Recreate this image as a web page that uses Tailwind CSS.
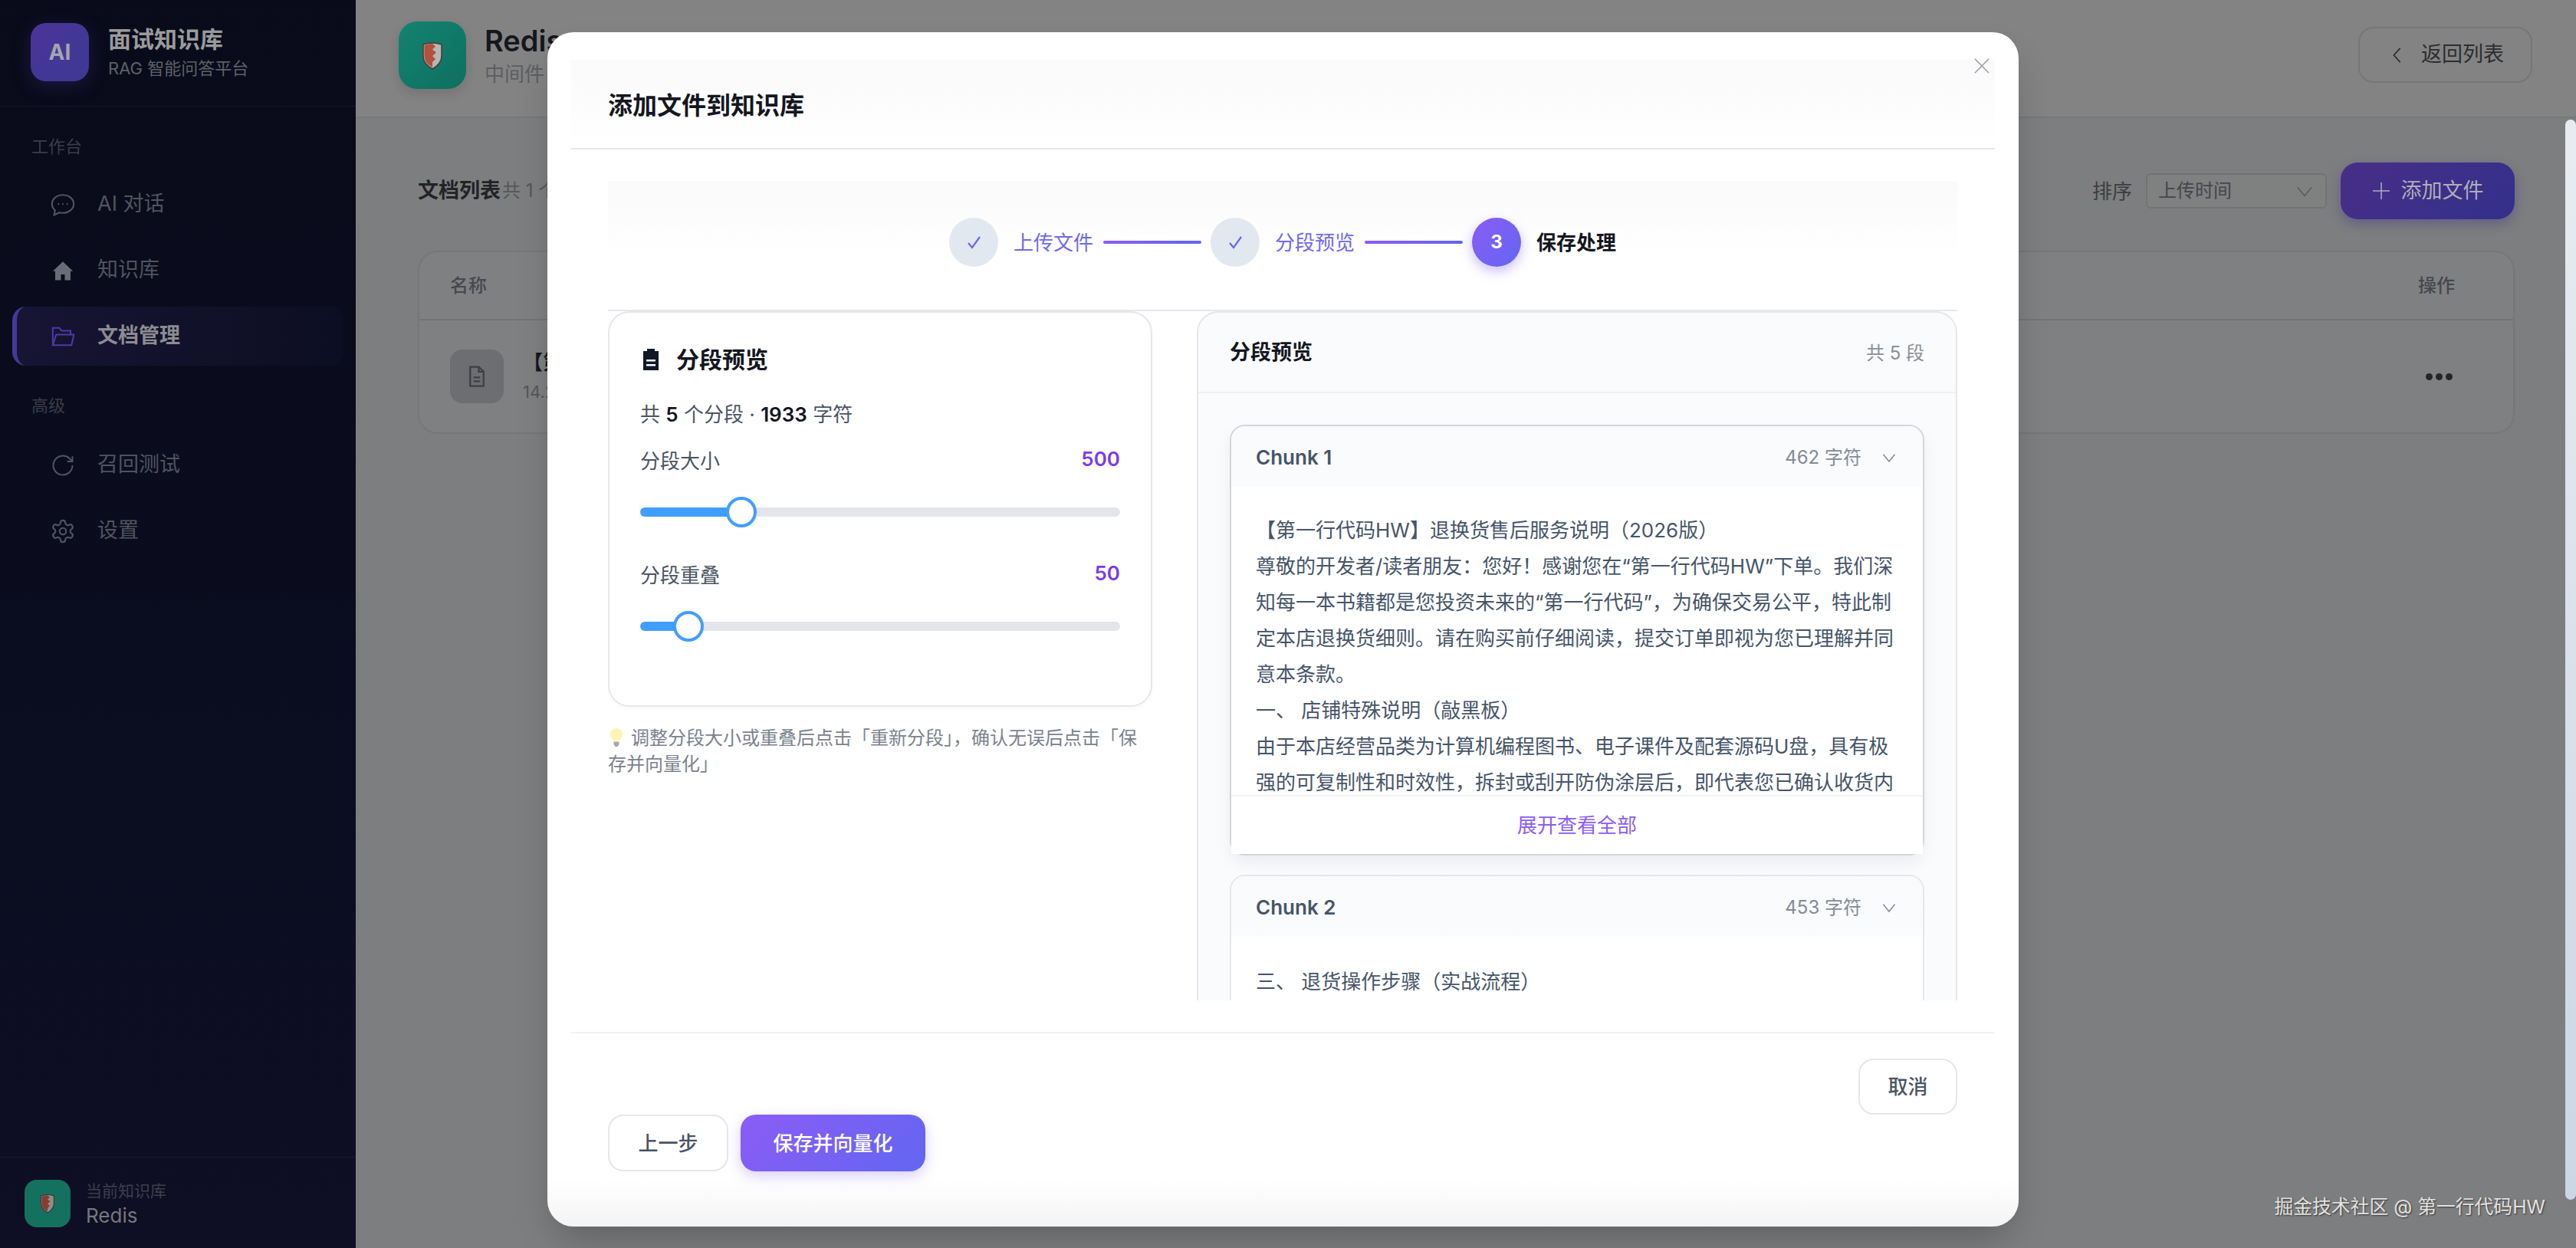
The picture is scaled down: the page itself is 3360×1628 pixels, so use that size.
<!DOCTYPE html>
<html lang="zh-CN">
<head>
  <meta charset="UTF-8" />
  <title>面试知识库 - 文档管理</title>
  <script src="https://cdn.jsdelivr.net/npm/@tailwindcss/browser@4"></script>
</head>
<body class="[font-family:Inter,'Noto_Sans_CJK_SC',sans-serif]">
<div class="relative flex h-[1628px] w-[3360px] overflow-hidden bg-[#7d7e7f]">

  <!-- 侧边栏（已被遮罩压暗） -->
  <aside class="flex h-full w-[464px] shrink-0 flex-col bg-[linear-gradient(180deg,#090b1a,#0b0d20_60%,#0e0e24)]">
    <div class="flex h-[139px] shrink-0 items-center gap-[25px] border-b border-[#14162a] pl-[40px] pb-[3px]">
      <div class="flex h-[76px] w-[76px] items-center justify-center rounded-[20px] bg-[linear-gradient(135deg,#4c3498,#3c3a94)] text-[28px] font-bold text-[#a5a5ad] shadow-[0_6px_24px_rgba(76,52,152,0.3)]">AI</div>
      <div class="flex flex-col">
        <span class="text-[30px] leading-[42px] font-semibold text-[#9a9a9c]">面试知识库</span>
        <span class="mt-[1px] text-[22px] leading-[32px] text-[#5e6068]">RAG 智能问答平台</span>
      </div>
    </div>

    <div class="px-[16px]">
      <div class="mt-[35px] mb-[20px] pl-[25px] text-[22px] leading-[34px] text-[#3a3d45]">工作台</div>
      <nav class="flex flex-col gap-[9px]">
        <a class="flex h-[77px] items-center gap-[30px] pl-[51px] text-[27px] text-[#50545e]">
          <svg class="-mx-[2px] h-[34px] w-[34px]" viewBox="0 0 24 24" fill="none" stroke="currentColor" stroke-width="1.500"><path d="M12 3c5.500 0 10 3.600 10 8.300s-4.500 8.300-10 8.300c-1.100 0-2.100-.1-3.100-.4L4 21.500l.8-4.300C3 15.700 2 13.600 2 11.300 2 6.600 6.500 3 12 3z"/><circle cx="8" cy="11.300" r=".8" fill="currentColor" stroke="none"/><circle cx="12" cy="11.300" r=".8" fill="currentColor" stroke="none"/><circle cx="16" cy="11.300" r=".8" fill="currentColor" stroke="none"/></svg>
          AI 对话
        </a>
        <a class="flex h-[77px] items-center gap-[30px] pl-[51px] text-[27px] text-[#50545e]">
          <svg class="h-[30px] w-[30px]" viewBox="0 0 24 24" fill="#686c76"><path d="M12 2.500 1.500 12.500H4V22h6v-6h4v6h6v-9.500h2.500z"/></svg>
          知识库
        </a>
        <a class="flex h-[77px] items-center gap-[30px] rounded-[18px] border-l-[6px] border-[#46389a] bg-[linear-gradient(90deg,#181434,#0c0e22)] pl-[45px] text-[27px] font-semibold text-[#8c8c92]">
          <svg class="h-[30px] w-[30px]" viewBox="0 0 24 24" fill="none" stroke="#4a3ca8" stroke-width="1.600"><path d="M1.500 21V3h7l2 3h9.500v4"/><path d="M1.500 21l3.500-11h18.500L21 21z"/></svg>
          文档管理
        </a>
      </nav>
      <div class="mt-[35px] mb-[22px] pl-[25px] text-[22px] leading-[34px] text-[#3a3d45]">高级</div>
      <nav class="flex flex-col gap-[9px]">
        <a class="flex h-[77px] items-center gap-[30px] pl-[51px] text-[27px] text-[#50545e]">
          <svg class="h-[30px] w-[30px]" viewBox="0 0 24 24" fill="none" stroke="currentColor" stroke-width="1.600"><path d="M22 12a10 10 0 1 1-3.100-7.200L22 8"/><path d="M22 2.500V8h-5.500"/></svg>
          召回测试
        </a>
        <a class="flex h-[77px] items-center gap-[30px] pl-[51px] text-[27px] text-[#50545e]">
          <svg class="-mx-[2px] h-[34px] w-[34px]" viewBox="0 0 24 24" fill="none" stroke="currentColor" stroke-width="1.500"><path d="M12.220 2h-.44a2 2 0 0 0-2 2v.18a2 2 0 0 1-1 1.730l-.43.25a2 2 0 0 1-2 0l-.15-.08a2 2 0 0 0-2.730.73l-.22.38a2 2 0 0 0 .73 2.730l.15.1a2 2 0 0 1 1 1.720v.51a2 2 0 0 1-1 1.740l-.15.09a2 2 0 0 0-.73 2.730l.22.38a2 2 0 0 0 2.730.73l.15-.08a2 2 0 0 1 2 0l.43.25a2 2 0 0 1 1 1.730V20a2 2 0 0 0 2 2h.44a2 2 0 0 0 2-2v-.18a2 2 0 0 1 1-1.730l.43-.25a2 2 0 0 1 2 0l.15.08a2 2 0 0 0 2.730-.73l.22-.39a2 2 0 0 0-.73-2.730l-.15-.08a2 2 0 0 1-1-1.740v-.5a2 2 0 0 1 1-1.740l.15-.09a2 2 0 0 0 .73-2.730l-.22-.38a2 2 0 0 0-2.730-.73l-.15.08a2 2 0 0 1-2 0l-.43-.25a2 2 0 0 1-1-1.730V4a2 2 0 0 0-2-2z"/><circle cx="12" cy="12" r="3"/></svg>
          设置
        </a>
      </nav>
    </div>

    <!-- 当前知识库 -->
    <div class="mt-auto flex h-[119px] items-start gap-[20px] border-t border-[#1a1a30] pt-[29px] pl-[32px]">
      <div class="flex h-[62px] w-[60px] items-center justify-center rounded-[16px] bg-[#14705f]">
        <svg class="h-[26px] w-[18px]" viewBox="0 0 26 37"><path d="M1 4Q13 0 25 4V19Q25 29 13 36 1 29 1 19z" fill="#8e8e8c" stroke="#3e302e" stroke-width="1.500"/><path d="M2.500 5Q8 3 13 3l4 3.500-4 4 5 4-5 4.500 4 4-4 4V34Q2.500 28 2.500 19z" fill="#8c3a2e"/></svg>
      </div>
      <div class="flex flex-col">
        <span class="text-[21px] leading-[30px] text-[#3e3f4a]">当前知识库</span>
        <span class="text-[26px] leading-[34px] text-[#77777f]">Redis</span>
      </div>
    </div>
  </aside>

  <!-- 主内容区 -->
  <main class="flex h-full min-w-0 flex-1 flex-col">
    <header class="flex h-[154px] shrink-0 items-start justify-between border-b-2 border-[#777879] bg-[#838383] pr-[57px] pl-[56px]">
      <div class="mt-[28px] flex items-center gap-[24px]">
        <div class="flex h-[88px] w-[88px] items-center justify-center rounded-[24px] bg-[linear-gradient(135deg,#13836f,#0f6f60)] shadow-[0_6px_14px_rgba(0,0,0,0.12)]">
          <svg class="h-[37px] w-[26px]" viewBox="0 0 26 37"><path d="M1 4Q13 0 25 4V19Q25 29 13 36 1 29 1 19z" fill="#b6b6b4" stroke="#4a3a38" stroke-width="1.500"/><path d="M2.500 5Q8 3 13 3l4 3.500-4 4 5 4-5 4.500 4 4-4 4V34Q2.500 28 2.500 19z" fill="#b4503e"/></svg>
        </div>
        <div class="flex flex-col">
          <span class="text-[38px] leading-[46px] font-semibold text-[#15171c]">Redis</span>
          <span class="mt-[3px] text-[26px] leading-[36px] text-[#5c5e62]">中间件</span>
        </div>
      </div>
      <button class="mt-[35px] flex h-[73px] w-[227px] items-center gap-[20px] rounded-[20px] border-2 border-[#757677] pl-[38px] text-[27px] text-[#2c2d31]">
        <svg class="h-[22px] w-[22px]" viewBox="0 0 24 24" fill="none" stroke="currentColor" stroke-width="1.800"><path d="M16 2 7 12l9 10"/></svg>
        返回列表
      </button>
    </header>

    <section class="flex-1 pt-[58px] pr-[80px] pl-[81px]">
      <div class="flex h-[74px] items-center justify-between">
        <div class="flex items-center gap-[2px] text-[24px] text-[#55575c]">
          <span class="text-[27px] font-semibold text-[#222327]">文档列表</span>
          <span>共 1 个文档</span>
        </div>
        <div class="flex items-center gap-[18px]">
          <span class="text-[26px] text-[#3c3d42]">排序</span>
          <div class="flex h-[46px] w-[236px] items-center justify-between rounded-[6px] border-2 border-[#727375] bg-[#7f8080] pr-[16px] pl-[14px] text-[24px] text-[#45464b]">
            上传时间
            <svg class="h-[22px] w-[22px]" viewBox="0 0 24 24" fill="none" stroke="#55565a" stroke-width="1.500"><path d="M2 7l10 12L22 7"/></svg>
          </div>
          <button class="flex h-[74px] w-[227px] items-center justify-center gap-[14px] rounded-[22px] bg-[linear-gradient(135deg,#482e88,#33308a)] text-[27px] text-[#b0aeb8] shadow-[0_6px_16px_rgba(60,48,140,0.4)]">
            <svg class="h-[24px] w-[24px]" viewBox="0 0 24 24" fill="none" stroke="currentColor" stroke-width="1.500"><path d="M12 1v22M1 12h22"/></svg>
            添加文件
          </button>
        </div>
      </div>

      <div class="mt-[41px] h-[239px] rounded-[26px] border-2 border-[#767779] bg-[#7f8081]">
        <div class="flex h-[89px] items-center justify-between border-b-2 border-[#737476] pr-[76px] pl-[40px] text-[24px] font-medium text-[#46484e]">
          <span>名称</span>
          <span>操作</span>
        </div>
        <div class="flex h-[146px] items-center justify-between pr-[79px] pl-[40px]">
          <div class="flex items-center gap-[25px]">
            <div class="flex h-[70px] w-[70px] items-center justify-center rounded-[16px] bg-[#6c6e71]">
              <svg class="h-[30px] w-[30px]" viewBox="0 0 24 24" fill="none" stroke="#3d3f44" stroke-width="1.800"><path d="M5 2h9l5 5v15H5z"/><path d="M14 2v5h5M8.500 13h7M8.500 17h7"/></svg>
            </div>
            <!-- 文件名被弹窗挡住，只露出开头 -->
            <div class="flex w-[60px] flex-col overflow-hidden">
              <span class="text-[26px] leading-[34px] font-semibold whitespace-nowrap text-[#15171c]">【第</span>
              <span class="mt-[6px] text-[22px] leading-[30px] whitespace-nowrap text-[#55575c]">14.2</span>
            </div>
          </div>
          <div class="flex gap-[4px]">
            <span class="h-[9px] w-[9px] rounded-full bg-[#25262a]"></span>
            <span class="h-[9px] w-[9px] rounded-full bg-[#25262a]"></span>
            <span class="h-[9px] w-[9px] rounded-full bg-[#25262a]"></span>
          </div>
        </div>
      </div>
    </section>
  </main>

  <!-- 滚动条 -->
  <div class="absolute top-[156px] right-0 h-[1409px] w-[14px] rounded-full bg-[linear-gradient(180deg,#e8ecf2,#ccd6e4)]"></div>

  <!-- 弹窗：添加文件到知识库 -->
  <div class="absolute top-[42px] left-[714px] flex h-[1558px] w-[1919px] flex-col rounded-[34px] bg-[linear-gradient(180deg,#fff_96%,#f4f4f5)] shadow-[0_25px_50px_-12px_rgba(0,0,0,0.25)]">
    <button class="absolute top-[33px] right-[37px] text-[#9a9ca1]">
      <svg class="h-[22px] w-[22px]" viewBox="0 0 24 24" fill="none" stroke="currentColor" stroke-width="1.600"><path d="M2 2l20 20M22 2 2 22"/></svg>
    </button>

    <div class="mx-[31px] mt-[36px] flex h-[117px] shrink-0 items-center border-b-2 border-[#e7e8ea] bg-[linear-gradient(180deg,#fafafb,#fff)] pt-[5px] pl-[48px] text-[32px] font-semibold text-[#15171f]">添加文件到知识库</div>

    <div class="mt-[41px] mr-[80px] ml-[79px] flex h-[170px] shrink-0 justify-center border-b-2 border-[#e7e8ef] bg-[linear-gradient(180deg,#fafafb,#fff_60%)] pt-[48px]">
      <div class="flex h-[64px] items-center text-[26px] whitespace-nowrap">
        <div class="flex h-[64px] w-[64px] items-center justify-center rounded-full bg-[#e2e8f0]">
          <svg class="h-[24px] w-[24px]" viewBox="0 0 24 24" fill="none" stroke="#6366f1" stroke-width="2.200"><path d="M5 13l5 6L20 5"/></svg>
        </div>
        <span class="ml-[20px] w-[104px] text-[#6f68ee]">上传文件</span>
        <span class="mr-[12px] ml-[13px] h-[4px] w-[128px] rounded-full bg-[linear-gradient(90deg,#8b5cf6,#6366f1)]"></span>
        <div class="flex h-[64px] w-[64px] items-center justify-center rounded-full bg-[#e2e8f0]">
          <svg class="h-[24px] w-[24px]" viewBox="0 0 24 24" fill="none" stroke="#6366f1" stroke-width="2.200"><path d="M5 13l5 6L20 5"/></svg>
        </div>
        <span class="ml-[20px] w-[104px] text-[#6f68ee]">分段预览</span>
        <span class="mr-[12px] ml-[13px] h-[4px] w-[128px] rounded-full bg-[linear-gradient(90deg,#8b5cf6,#6366f1)]"></span>
        <div class="flex h-[64px] w-[64px] items-center justify-center rounded-full bg-[linear-gradient(135deg,#8b5cf6,#6366f1)] text-[24px] font-bold text-white shadow-[0_6px_16px_rgba(124,92,246,0.4)]">3</div>
        <span class="ml-[20px] w-[104px] font-semibold text-[#15171f]">保存处理</span>
      </div>
    </div>

    <div class="mr-[80px] ml-[79px] flex h-[899px] shrink-0 gap-[58px] overflow-hidden">
      <!-- 左：参数 -->
      <div class="w-[710px] shrink-0">
        <div class="h-[516px] rounded-[28px] border-2 border-[#e5e7eb] px-[40px] pt-[41px] shadow-[0_2px_6px_rgba(0,0,0,0.03)]">
          <div class="flex h-[40px] items-center gap-[22px] pl-[3px] text-[30px] font-semibold text-[#15171f]">
            <svg class="h-[28px] w-[22px]" viewBox="0 0 22 28"><path d="M1 3h5V0h10v3h5v25H1z" fill="#111827"/><path d="M5 14h12v2.500H5zM5 20h12v2.500H5z" fill="#fff"/></svg>
            分段预览
          </div>
          <div class="mt-[34px] h-[36px] text-[26px] leading-[36px] text-[#4b5563]">共 <b class="font-semibold text-[#15171f]">5</b> 个分段 · <b class="font-semibold text-[#15171f]">1933</b> 字符</div>

          <div class="mt-[25px] flex h-[36px] items-start justify-between text-[26px] leading-[36px] text-[#4b5563]">
            <span>分段大小</span>
            <span class="-mt-[3px] font-semibold text-[#7c3aed]">500</span>
          </div>
          <div class="mt-[28px] flex h-[40px] items-center">
            <div class="h-[12px] w-[132px] rounded-l-full bg-[#409eff]"></div>
            <div class="z-10 -ml-[20px] h-[40px] w-[40px] shrink-0 rounded-full border-[4px] border-[#409eff] bg-white"></div>
            <div class="-ml-[20px] h-[12px] flex-1 rounded-r-full bg-[#e4e5ea]"></div>
          </div>

          <div class="mt-[45px] flex h-[36px] items-start justify-between text-[26px] leading-[36px] text-[#4b5563]">
            <span>分段重叠</span>
            <span class="-mt-[3px] font-semibold text-[#7c3aed]">50</span>
          </div>
          <div class="mt-[28px] flex h-[40px] items-center">
            <div class="h-[12px] w-[63px] rounded-l-full bg-[#409eff]"></div>
            <div class="z-10 -ml-[20px] h-[40px] w-[40px] shrink-0 rounded-full border-[4px] border-[#409eff] bg-white"></div>
            <div class="-ml-[20px] h-[12px] flex-1 rounded-r-full bg-[#e4e5ea]"></div>
          </div>
        </div>
        <p class="mt-[24px] text-[24px] leading-[34px] whitespace-nowrap text-[#7b828e]">
          <svg class="mr-[10px] ml-[2px] inline-block h-[26px] w-[18px] align-[-4px]" viewBox="0 0 18 26"><path d="M9 1c4.500 0 8 3.300 8 7.500 0 3.500-2.800 5.500-3.500 9h-9C3.800 14 1 12 1 8.500 1 4.300 4.500 1 9 1z" fill="#fdf3b4"/><path d="M5.500 18.500h7V22l-2 3h-3l-2-3z" fill="#a8a9a2"/></svg>调整分段大小或重叠后点击「重新分段」，确认无误后点击「保<br />存并向量化」
        </p>
      </div>

      <!-- 右：分段列表 -->
      <div class="h-[960px] min-w-0 flex-1 rounded-[28px] border-2 border-[#e5e7eb] bg-[#fafbfd]">
        <div class="flex h-[105px] items-center justify-between border-b-2 border-[#f0f1f4] px-[41px] pt-[2px]">
          <span class="text-[27px] font-semibold text-[#15171f]">分段预览</span>
          <span class="text-[24px] text-[#8b9099]">共 5 段</span>
        </div>
        <div class="flex flex-col gap-[25px] px-[41px] pt-[41px]">
          <div class="h-[562px] rounded-[20px] border-2 border-[#d3d6dc] bg-white shadow-[0_10px_20px_rgba(15,23,42,0.06)]">
            <div class="flex h-[79px] items-center justify-between rounded-t-[18px] bg-[linear-gradient(180deg,#f8fafc,#fbfcfd)] pt-[2px] pr-[34px] pl-[32px]">
              <span class="text-[26px] font-semibold text-[#475569]">Chunk 1</span>
              <span class="flex items-center gap-[26px] text-[24px] text-[#858b95]">462 字符
                <svg class="h-[20px] w-[20px]" viewBox="0 0 24 24" fill="none" stroke="currentColor" stroke-width="1.800"><path d="M3 7l9 11 9-11"/></svg>
              </span>
            </div>
            <div class="h-[402px] overflow-hidden px-[32px] pt-[33px] text-[26px] leading-[47px] whitespace-nowrap text-[#475569]">
              【第一行代码HW】退换货售后服务说明（2026版）<br />
              尊敬的开发者/读者朋友：您好！感谢您在“第一行代码HW”下单。我们深<br />
              知每一本书籍都是您投资未来的“第一行代码”，为确保交易公平，特此制<br />
              定本店退换货细则。请在购买前仔细阅读，提交订单即视为您已理解并同<br />
              意本条款。<br />
              一、 店铺特殊说明（敲黑板）<br />
              由于本店经营品类为计算机编程图书、电子课件及配套源码U盘，具有极<br />
              强的可复制性和时效性，拆封或刮开防伪涂层后，即代表您已确认收货内
            </div>
            <div class="flex h-[77px] items-center justify-center border-t-2 border-[#f1f2f4] bg-white text-[26px] text-[#8b5cf6]">展开查看全部</div>
          </div>

          <div class="rounded-[20px] border-2 border-[#e5e7eb] bg-white">
            <div class="flex h-[79px] items-center justify-between rounded-t-[18px] bg-[linear-gradient(180deg,#f8fafc,#fbfcfd)] pt-[2px] pr-[34px] pl-[32px]">
              <span class="text-[26px] font-semibold text-[#475569]">Chunk 2</span>
              <span class="flex items-center gap-[26px] text-[24px] text-[#858b95]">453 字符
                <svg class="h-[20px] w-[20px]" viewBox="0 0 24 24" fill="none" stroke="currentColor" stroke-width="1.800"><path d="M3 7l9 11 9-11"/></svg>
              </span>
            </div>
            <div class="h-[200px] px-[32px] pt-[35px] text-[26px] leading-[47px] text-[#475569]">三、 退货操作步骤（实战流程）</div>
          </div>
        </div>
      </div>
    </div>

    <!-- 底部按钮 -->
    <div class="mx-[31px] mt-[41px] border-t-2 border-[#f1f2f4] pt-[33px] pr-[49px] pl-[48px]">
      <div class="flex justify-end">
        <button class="h-[73px] w-[129px] rounded-[20px] border-2 border-[#e5e7eb] bg-white text-[26px] font-medium text-[#4b5563]">取消</button>
      </div>
      <div class="flex gap-[16px]">
        <button class="h-[74px] w-[157px] rounded-[20px] border-2 border-[#e5e7eb] bg-white text-[26px] font-medium text-[#4b5563]">上一步</button>
        <button class="h-[74px] w-[241px] rounded-[20px] bg-[linear-gradient(135deg,#8b5cf6,#6366f1)] text-[26px] font-medium text-white shadow-[0_6px_18px_rgba(124,92,246,0.3)]">保存并向量化</button>
      </div>
    </div>
  </div>

  <!-- 水印 -->
  <div class="absolute right-[40px] bottom-[38px] text-[24.800px] leading-[32px] text-[#e2e2e2] [text-shadow:1px_1px_2px_rgba(0,0,0,0.6)]">掘金技术社区 @ 第一行代码HW</div>
</div>
</body>
</html>
